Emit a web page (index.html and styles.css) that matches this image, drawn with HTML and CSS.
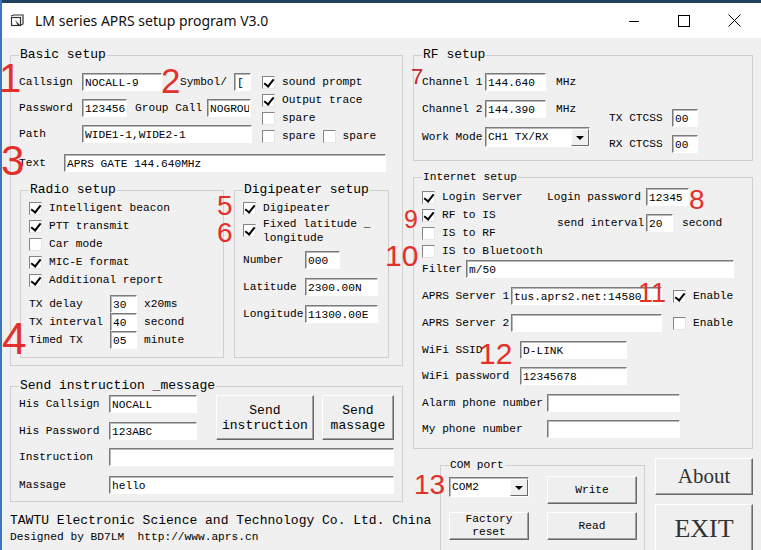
FILE: index.html
```html
<!DOCTYPE html>
<html lang="en">
<head>
    <meta charset="UTF-8">
    <title>LM series APRS setup program V3.0</title>
    <link rel="stylesheet" href="styles.css">
</head>
<body>
<div id="window">
    <div class="titlebar">
        <svg class="app-icon" width="14" height="14" viewBox="0 0 14 14">
            <rect x="1.5" y="3.5" width="9" height="8" fill="none" stroke="#333" stroke-width="1.2"/>
            <path d="M1 2 L4 1 L13 1 L13 10 L11 11" fill="none" stroke="#333" stroke-width="1.2"/>
            <path d="M5 6 L10 11 L8 12 Z" fill="#333"/>
        </svg>
        <span class="title">LM series APRS setup program V3.0</span>
        <div class="caption">
            <span class="cap"><svg width="12" height="12" viewBox="0 0 12 12"><path d="M1 6.5 H11" stroke="#000" stroke-width="1"/></svg></span>
            <span class="cap"><svg width="12" height="12" viewBox="0 0 12 12"><rect x="0.5" y="0.5" width="11" height="11" fill="none" stroke="#000" stroke-width="1"/></svg></span>
            <span class="cap"><svg width="13" height="13" viewBox="0 0 13 13"><path d="M0.5 0.5 L12.5 12.5 M12.5 0.5 L0.5 12.5" stroke="#000" stroke-width="1"/></svg></span>
        </div>
    </div>

    <div class="client">
        <div class="col-left">
            <fieldset class="group basic">
                <legend class="big">Basic setup</legend>
                <div class="basic-top">
                    <div class="basic-fields">
                        <div class="row">
                            <span class="lbl l63">Callsign</span><input class="tb w80" value="NOCALL-9">
                            <span class="lbl l54 ml18">Symbol/</span><input class="tb w17" value="[">
                        </div>
                        <div class="row gap8">
                            <span class="lbl l63">Password</span><input class="tb w45" value="123456">
                            <span class="lbl l72 ml8">Group Call</span><input class="tb w44" value="NOGROU">
                        </div>
                        <div class="row gap8">
                            <span class="lbl l63">Path</span><input class="tb w170" value="WIDE1-1,WIDE2-1">
                        </div>
                    </div>
                    <div class="checks">
                        <label class="ck"><span class="box on"></span>sound prompt</label>
                        <label class="ck"><span class="box on"></span>Output trace</label>
                        <label class="ck"><span class="box"></span>spare</label>
                        <label class="ck"><span class="box"></span>spare<span class="box ml7"></span>spare</label>
                    </div>
                </div>
                <div class="row text-row">
                    <span class="lbl l45">Text</span><input class="tb w322" value="APRS GATE 144.640MHz">
                </div>
                <div class="sub-row">
                    <fieldset class="group radio">
                        <legend class="big">Radio setup</legend>
                        <label class="ck"><span class="box on"></span>Intelligent beacon</label>
                        <label class="ck"><span class="box on"></span>PTT transmit</label>
                        <label class="ck"><span class="box"></span>Car mode</label>
                        <label class="ck"><span class="box on"></span>MIC-E format</label>
                        <label class="ck"><span class="box on"></span>Additional report</label>
                        <div class="tx-rows">
                            <div class="row"><span class="lbl l81">TX delay</span><input class="tb w27" value="30"><span class="unit">x20ms</span></div>
                            <div class="row"><span class="lbl l81">TX interval</span><input class="tb w27" value="40"><span class="unit">second</span></div>
                            <div class="row"><span class="lbl l81">Timed TX</span><input class="tb w27" value="05"><span class="unit">minute</span></div>
                        </div>
                    </fieldset>
                    <fieldset class="group digi">
                        <legend class="big">Digipeater setup</legend>
                        <label class="ck"><span class="box on"></span>Digipeater</label>
                        <label class="ck tall"><span class="box on"></span><span class="two">Fixed latitude _<br>longitude</span></label>
                        <div class="row gap7"><span class="lbl l62">Number</span><input class="tb w35" value="000"></div>
                        <div class="row gap9"><span class="lbl l62">Latitude</span><input class="tb w73" value="2300.00N"></div>
                        <div class="row gap9"><span class="lbl l62">Longitude</span><input class="tb w73" value="11300.00E"></div>
                    </fieldset>
                </div>
            </fieldset>

            <fieldset class="group send">
                <legend class="big">Send instruction _message</legend>
                <div class="send-top">
                    <div class="send-fields">
                        <div class="row"><span class="lbl l90">His Callsign</span><input class="tb w88" value="NOCALL"></div>
                        <div class="row gap9"><span class="lbl l90">His Password</span><input class="tb w88" value="123ABC"></div>
                    </div>
                    <button class="btn send-instr">Send<br>instruction</button>
                    <button class="btn send-msg">Send<br>massage</button>
                </div>
                <div class="row gap8"><span class="lbl l90">Instruction</span><input class="tb w285" value=""></div>
                <div class="row gap10"><span class="lbl l90">Massage</span><input class="tb w285" value="hello"></div>
            </fieldset>

            <div class="footer">
                <p class="corp">TAWTU Electronic Science and Technology Co. Ltd. China</p>
                <p>Designed by BD7LM &nbsp;http://www.aprs.cn</p>
            </div>
        </div>

        <div class="col-right">
            <fieldset class="group rf">
                <legend class="big">RF setup</legend>
                <div class="rf-body">
                    <div class="rf-left">
                        <div class="row"><span class="lbl l63">Channel 1</span><input class="tb w61" value="144.640"><span class="unit ml10">MHz</span></div>
                        <div class="row gap9"><span class="lbl l63">Channel 2</span><input class="tb w61" value="144.390"><span class="unit ml10">MHz</span></div>
                        <div class="row gap9 h20"><span class="lbl l63">Work Mode</span>
                            <div class="combo w105"><span class="combo-text">CH1 TX/RX</span><span class="combo-btn"></span></div>
                        </div>
                    </div>
                    <div class="rf-right">
                        <div class="row"><span class="lbl l63">TX CTCSS</span><input class="tb w26" value="00"></div>
                        <div class="row gap8"><span class="lbl l63">RX CTCSS</span><input class="tb w26" value="00"></div>
                    </div>
                </div>
            </fieldset>

            <fieldset class="group inet">
                <legend class="small">Internet setup</legend>
                <div class="inet-top">
                    <div class="inet-checks">
                        <label class="ck"><span class="box on"></span>Login Server</label>
                        <label class="ck"><span class="box on"></span>RF to IS</label>
                        <label class="ck"><span class="box"></span>IS to RF</label>
                        <label class="ck"><span class="box"></span>IS to Bluetooth</label>
                    </div>
                    <div class="inet-right">
                        <div class="row"><span class="lbl l99">Login password</span><input class="tb w43" value="12345"></div>
                        <div class="row gap8 indent"><span class="lbl l89">send interval</span><input class="tb w27" value="20"><span class="unit ml9">second</span></div>
                    </div>
                </div>
                <div class="row"><span class="lbl l44">Filter</span><input class="tb w268" value="m/50"></div>
                <div class="row gap9"><span class="lbl l89">APRS Server 1</span><input class="tb w151" value="tus.aprs2.net:14580"><label class="ck inline ml11"><span class="box on"></span>Enable</label></div>
                <div class="row gap9"><span class="lbl l89">APRS Server 2</span><input class="tb w151" value=""><label class="ck inline ml11"><span class="box"></span>Enable</label></div>
                <div class="row gap9"><span class="lbl l98">WiFi SSID</span><input class="tb w107" value="D-LINK"></div>
                <div class="row gap8"><span class="lbl l98">WiFi password</span><input class="tb w107" value="12345678"></div>
                <div class="row gap9"><span class="lbl l125">Alarm phone number</span><input class="tb w133" value=""></div>
                <div class="row gap8"><span class="lbl l125">My phone number</span><input class="tb w133" value=""></div>
            </fieldset>

            <div class="bottom">
                <fieldset class="group com">
                    <legend class="small">COM port</legend>
                    <div class="com-grid">
                        <div class="combo w80 combo-com"><span class="combo-text">COM2</span><span class="combo-btn"></span></div>
                        <button class="btn">Write</button>
                        <button class="btn">Factory<br>reset</button>
                        <button class="btn">Read</button>
                    </div>
                </fieldset>
                <div class="big-btns">
                    <button class="btn about">About</button>
                    <button class="btn exit">EXIT</button>
                </div>
            </div>
        </div>
    </div>

    <span class="mark m1">1</span>
    <span class="mark m2">2</span>
    <span class="mark m3">3</span>
    <span class="mark m4">4</span>
    <span class="mark m5">5</span>
    <span class="mark m6">6</span>
    <span class="mark m7">7</span>
    <span class="mark m8">8</span>
    <span class="mark m9">9</span>
    <span class="mark m10">10</span>
    <span class="mark m11">11</span>
    <span class="mark m12">12</span>
    <span class="mark m13">13</span>
</div>
</body>
</html>
```

FILE: styles.css
```css
*{
    margin: 0;
    padding: 0;
    box-sizing: border-box;
}
body{
    background: #f0f0f0;
    font-family: "Liberation Mono", "DejaVu Sans Mono", monospace;
    font-size: 11.2px;
    color: #000;
    overflow: hidden;
}
#window{
    position: relative;
    width: 761px;
    height: 550px;
    border-left: 2px solid #3d76bd;
    background: #f0f0f0;
}

/* title bar */
.titlebar{
    height: 38px;
    border-top: 3px solid #22405f;
    background: #fff;
    display: flex;
    align-items: center;
    padding-left: 8px;
}
.app-icon{
    flex: none;
}
.title{
    margin-left: 11px;
    font-family: "Noto Sans", "Open Sans", sans-serif;
    font-size: 14px;
    color: #111;
}
.caption{
    margin-left: auto;
    margin-right: 2px;
    display: flex;
    height: 100%;
}
.cap{
    width: 50px;
    display: flex;
    align-items: center;
    justify-content: center;
}

/* main area */
.client{
    display: flex;
    gap: 10px;
    padding: 10px 0 0 8px;
}
.col-left{
    width: 393px;
    flex: none;
}
.col-right{
    width: 340px;
    flex: none;
}

.group{
    border: 1px solid #cfcfcf;
    padding: 0 8px;
    min-width: 0;
}
.group legend{
    padding: 0 1px;
    line-height: 14px;
    white-space: nowrap;
}
legend.big{
    font-size: 13px;
}
legend.small{
    font-size: 11.2px;
}

.row{
    display: flex;
    align-items: center;
    height: 18px;
    white-space: nowrap;
}
.h20{ height: 20px; }
.gap7{ margin-top: 7px; }
.gap8{ margin-top: 8px; }
.gap9{ margin-top: 9px; }
.gap10{ margin-top: 10px; }
.lbl{
    flex: none;
    white-space: nowrap;
}
.unit{
    margin-left: 7px;
}
.ml7{ margin-left: 7px; }
.ml8{ margin-left: 8px; }
.ml9{ margin-left: 9px; }
.ml10{ margin-left: 10px; }
.ml11{ margin-left: 11px; }
.ml18{ margin-left: 18px; }

.l44{ width: 44px; }
.l45{ width: 45px; }
.l54{ width: 54px; }
.l62{ width: 62px; }
.l63{ width: 63px; }
.l72{ width: 72px; }
.l81{ width: 81px; }
.l89{ width: 89px; }
.l90{ width: 90px; }
.l98{ width: 98px; }
.l99{ width: 99px; }
.l125{ width: 125px; }

/* text boxes */
.tb{
    flex: none;
    height: 18px;
    border: 1px solid;
    border-color: #7a7a7a #fff #fff #7a7a7a;
    box-shadow: inset 1px 1px 0 #b8b8b8;
    background: #fff;
    font-family: inherit;
    font-size: 11.2px;
    color: #000;
    padding: 1px 1px 0 2px;
    outline: none;
}
.w17{ width: 17px; }
.w26{ width: 26px; }
.w27{ width: 27px; }
.w35{ width: 35px; }
.w43{ width: 43px; }
.w44{ width: 44px; }
.w45{ width: 45px; }
.w61{ width: 61px; }
.w73{ width: 73px; }
.w80{ width: 80px; }
.w88{ width: 88px; }
.w105{ width: 105px; }
.w107{ width: 107px; }
.w133{ width: 133px; }
.w151{ width: 151px; }
.w170{ width: 170px; }
.w268{ width: 268px; }
.w285{ width: 285px; }
.w322{ width: 322px; }

/* check boxes */
.ck{
    display: flex;
    align-items: center;
    height: 18px;
    white-space: nowrap;
}
.ck.inline{
    height: auto;
}
.box{
    position: relative;
    flex: none;
    width: 13px;
    height: 13px;
    margin-right: 7px;
    background: #fff;
    border: 1px solid;
    border-color: #858585 #e6e6e6 #e6e6e6 #858585;
}
.box.on::after{
    content: "";
    position: absolute;
    left: 3px;
    top: 0;
    width: 4px;
    height: 8px;
    border: solid #000;
    border-width: 0 2px 2px 0;
    transform: rotate(38deg);
}
.ck.tall{
    height: 27px;
}
.two{
    line-height: 14px;
}

/* combo box */
.combo{
    flex: none;
    display: flex;
    height: 20px;
    background: #fff;
    border: 1px solid;
    border-color: #7a7a7a #fff #fff #7a7a7a;
    box-shadow: inset 1px 1px 0 #b8b8b8;
}
.combo-text{
    flex: 1;
    padding: 2px 0 0 2px;
    line-height: 15px;
}
.combo-btn{
    width: 18px;
    margin: 1px 0 0 0;
    background: #f0f0f0;
    border: 1px solid;
    border-color: #fff #6a6a6a #6a6a6a #fff;
    display: flex;
    align-items: center;
    justify-content: center;
}
.combo-btn::before{
    content: "";
    border-left: 4px solid transparent;
    border-right: 4px solid transparent;
    border-top: 4px solid #000;
}

/* buttons */
.btn{
    background: #efefef;
    border: 1px solid;
    border-color: #fff #696969 #696969 #fff;
    box-shadow: inset -1px -1px 0 #a0a0a0;
    font-family: inherit;
    font-size: 11.2px;
    color: #000;
    line-height: 13px;
}

/* basic setup */
.basic{
    padding-top: 11px;
    padding-bottom: 7px;
}
.basic-top{
    display: flex;
}
.basic-fields{
    width: 233px;
    flex: none;
}
.checks{
    margin-left: 10px;
}
.text-row{
    margin-top: 9px;
}
.sub-row{
    display: flex;
    gap: 10px;
    margin: 11px 0 0 1px;
}
.radio{
    width: 204px;
    padding: 2px 8px 8px;
}
.tx-rows{
    margin-top: 6px;
}
.digi{
    width: 155px;
    padding: 2px 8px 7px;
}

/* send instruction */
.send{
    margin-top: 13px;
    padding: 2px 8px 7px;
}
.send-top{
    display: flex;
}
.send-instr{
    margin-left: 19px;
    width: 99px;
    height: 45px;
    font-size: 13px;
    line-height: 15px;
}
.send-msg{
    margin-left: 8px;
    width: 73px;
    height: 45px;
    font-size: 13px;
    line-height: 15px;
}

.footer{
    margin-top: 11px;
    white-space: nowrap;
    line-height: 16px;
}
.footer .corp{
    font-size: 13px;
}

/* RF setup */
.rf{
    padding: 11px 8px 7px;
}
.rf-body{
    display: flex;
}
.rf-left{
    width: 168px;
    flex: none;
}
.rf-right{
    margin-left: 19px;
    padding-top: 36px;
}

/* internet setup */
.inet{
    margin-top: 9px;
    padding: 4px 8px 10px;
}
.inet-top{
    display: flex;
}
.inet-checks{
    width: 125px;
    flex: none;
}
.indent{
    padding-left: 10px;
}

/* COM port + big buttons */
.bottom{
    display: flex;
    margin-top: 9px;
    padding-left: 27px;
}
.com{
    width: 205px;
    padding: 4px 8px 5px;
}
.com-grid{
    display: grid;
    grid-template-columns: 80px 90px;
    grid-template-rows: 28px 28px;
    column-gap: 18px;
    row-gap: 8px;
}
.combo-com{
    margin-top: 1px;
}
.big-btns{
    margin-left: 10px;
    width: 98px;
    display: flex;
    flex-direction: column;
}
.about{
    height: 37px;
    font-family: "Liberation Serif", serif;
    font-size: 21px;
    color: #333;
}
.exit{
    margin-top: 9px;
    height: 48px;
    font-family: "Liberation Serif", serif;
    font-size: 26px;
    color: #333;
}

/* red annotation numbers */
.mark{
    position: absolute;
    font-family: "Liberation Sans", Arial, sans-serif;
    line-height: 1;
    color: #e3302a;
}
.m1{ left: -3px; top: 58px; font-size: 40px; }
.m2{ left: 159px; top: 63px; font-size: 35px; }
.m3{ left: -1px; top: 140px; font-size: 42px; }
.m4{ left: 0; top: 317px; font-size: 44px; }
.m5{ left: 215px; top: 192px; font-size: 28px; }
.m6{ left: 215px; top: 219px; font-size: 28px; }
.m7{ left: 409px; top: 66px; font-size: 22px; color: #c0272d; }
.m8{ left: 687px; top: 186px; font-size: 28px; }
.m9{ left: 402px; top: 207px; font-size: 25px; }
.m10{ left: 383px; top: 241px; font-size: 30px; }
.m11{ left: 636px; top: 280px; font-size: 27px; }
.m12{ left: 477px; top: 339px; font-size: 30px; }
.m13{ left: 412px; top: 471px; font-size: 28px; }
```
